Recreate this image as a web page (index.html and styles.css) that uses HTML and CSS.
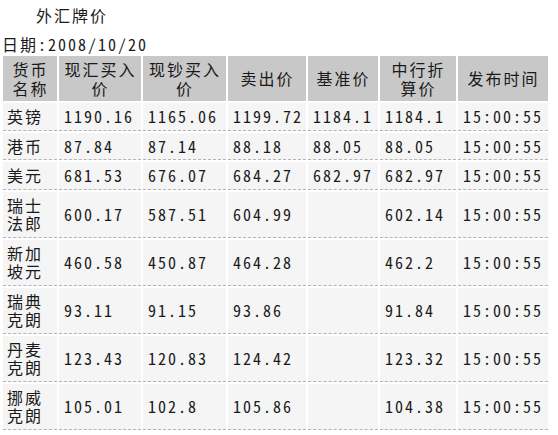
FILE: index.html
```html
<!DOCTYPE html>
<html lang="zh-CN">
<head>
<meta charset="utf-8">
<title>外汇牌价</title>
<link rel="stylesheet" href="styles.css">
</head>
<body>
<div class="page">
  <div class="title">外汇牌价</div>
  <div class="date">日期:2008/10/20</div>
  <table class="rates">
    <thead>
      <tr>
        <th class="c1">货币<br>名称</th>
        <th class="c2">现汇买入<br>价</th>
        <th class="c3">现钞买入<br>价</th>
        <th class="c4">卖出价</th>
        <th class="c5">基准价</th>
        <th class="c6">中行折<br>算价</th>
        <th class="c7">发布时间</th>
      </tr>
    </thead>
    <tbody>
      <tr><td>英镑</td><td>1190.16</td><td>1165.06</td><td>1199.72</td><td>1184.1</td><td>1184.1</td><td>15:00:55</td></tr>
      <tr><td>港币</td><td>87.84</td><td>87.14</td><td>88.18</td><td>88.05</td><td>88.05</td><td>15:00:55</td></tr>
      <tr><td>美元</td><td>681.53</td><td>676.07</td><td>684.27</td><td>682.97</td><td>682.97</td><td>15:00:55</td></tr>
      <tr><td>瑞士<br>法郎</td><td>600.17</td><td>587.51</td><td>604.99</td><td></td><td>602.14</td><td>15:00:55</td></tr>
      <tr><td>新加<br>坡元</td><td>460.58</td><td>450.87</td><td>464.28</td><td></td><td>462.2</td><td>15:00:55</td></tr>
      <tr><td>瑞典<br>克朗</td><td>93.11</td><td>91.15</td><td>93.86</td><td></td><td>91.84</td><td>15:00:55</td></tr>
      <tr><td>丹麦<br>克朗</td><td>123.43</td><td>120.83</td><td>124.42</td><td></td><td>123.32</td><td>15:00:55</td></tr>
      <tr><td>挪威<br>克朗</td><td>105.01</td><td>102.8</td><td>105.86</td><td></td><td>104.38</td><td>15:00:55</td></tr>
    </tbody>
  </table>
</div>
</body>
</html>
```

FILE: styles.css
```css
html, body {
  margin: 0;
  padding: 0;
  background: #ffffff;
}

.page {
  padding: 6px 0 0 1px;
  font-family: "Noto Sans Mono CJK SC", "Noto Sans CJK SC", "Liberation Mono", monospace;
  font-size: 16px;
  letter-spacing: 2px;
  color: #1a1a1a;
}

.title {
  padding-left: 35px;
  line-height: 19px;
  margin-bottom: 10px;
}

.date {
  padding-left: 1px;
  line-height: 19px;
}

.rates {
  border-collapse: separate;
  border-spacing: 2px;
  table-layout: fixed;
  width: 549px;
}

.rates th,
.rates td {
  box-sizing: border-box;
  line-height: 18.5px;
  padding: 4px 1px 4px 4px;
  vertical-align: middle;
  white-space: nowrap;
}

.rates th {
  background: #c8c8c8;
  font-weight: normal;
  text-align: center;
  padding-left: 2px;
}

.rates td {
  background: #f5f5f5;
  text-align: left;
  border-bottom: 1px dashed #b4b4b4;
}

.rates td + td {
  padding-left: 5px;
}

.c1 { width: 54px; }
.c2 { width: 82px; }
.c3 { width: 83px; }
.c4 { width: 78px; }
.c5 { width: 70px; }
.c6 { width: 76px; }
.c7 { width: 90px; }
```
